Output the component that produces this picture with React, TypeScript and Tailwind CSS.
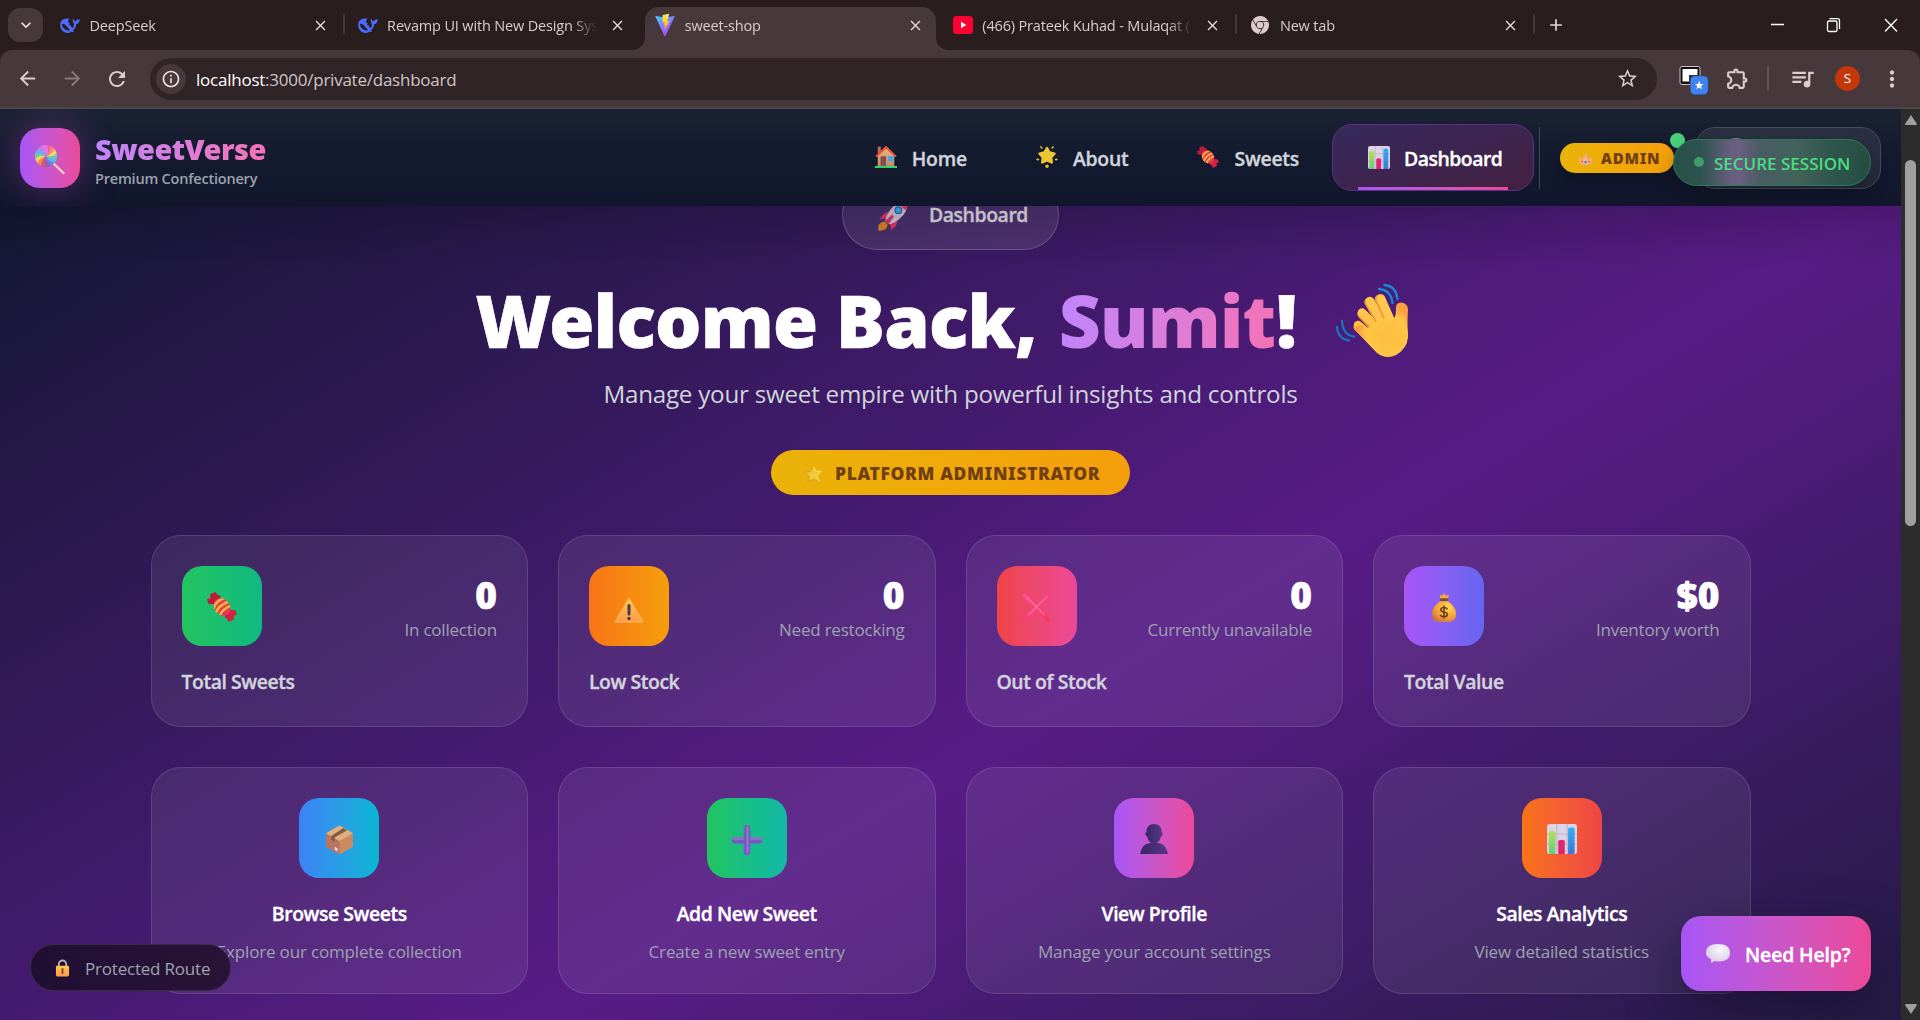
import type { ReactNode } from "react";
import {
  MdAdd,
  MdArrowBack,
  MdArrowForward,
  MdClose,
  MdInfoOutline,
  MdKeyboardArrowDown,
  MdMoreVert,
  MdOutlineExtension,
  MdQueueMusic,
  MdRefresh,
  MdStarOutline,
} from "react-icons/md";
import { SiGooglechrome } from "react-icons/si";

/* ---------- Tab favicons ---------- */

function WhaleIcon() {
  return (
    <svg viewBox="0 0 40 30" className="h-[15px] w-5">
      <path
        d="M19 1.500C11-.5 3 2.500 1 9-1 17 2 24 8 28c5 3 11 2.500 15-1 1.500 1 4 1 5 .5.500-1-1.500-1.500-2-3 4-3.500 6-7.500 6.300-12C37 11.500 39 8.500 39.500 2.500c-2-.5-3 1-5.500 1.500-2 .5-3.500 2-4 4-1-2.500-1.500-5-4-6.500-1 3.500-.5 7 1.500 9.500 1 4-.5 7.500-3 9.500C21.500 17 20.500 11 16 8c0-2.500 1-5 3-6.500z"
        fill="#4d6bfe"
      />
      <path d="M4 11.500c6-.5 10 6 14.500 11 1.500 1.500.5 3-1.500 2.500C9 24 4 18.500 4 11.500z" fill="#291d1e" />
      <circle cx="20" cy="13" r="1.700" fill="#291d1e" />
    </svg>
  );
}

function ViteIcon() {
  return (
    <svg viewBox="0 0 24 28" className="h-6 w-5">
      <defs>
        <linearGradient id="vite-v" x1="0" y1="0" x2=".7" y2="1">
          <stop offset="0" stopColor="#41d1ff" />
          <stop offset="1" stopColor="#bd34fe" />
        </linearGradient>
        <linearGradient id="vite-b" x1="0" y1="0" x2="0" y2="1">
          <stop offset="0" stopColor="#ffea83" />
          <stop offset=".3" stopColor="#ffdd35" />
          <stop offset="1" stopColor="#ff9a00" />
        </linearGradient>
      </defs>
      <path d="M.3 3.600 11.500 27.500q.5.700 1 0L23.700 3.600q.1-.6-.6-.5L12 5 .9 3.100q-.7-.1-.6.5z" fill="url(#vite-v)" />
      <path d="M17 .5 9.200 2 8.700 10.800l2.600-.5-.8 4.300 1.700-.5-1.200 6.500c2.200-3.700 4.600-7.300 6.400-11.500l-2.700.5z" fill="url(#vite-b)" />
    </svg>
  );
}

function YoutubeIcon() {
  return (
    <svg viewBox="0 0 20 18" className="h-[18px] w-5">
      <rect width="20" height="18" rx="3.500" fill="#ff0033" />
      <path d="M8 5.800v6.400L13.300 9z" fill="#fff" />
    </svg>
  );
}

/* ---------- Glossy emoji ---------- */

function Defs() {
  return (
    <svg className="absolute size-0">
      <defs>
        <linearGradient id="goldV" x1="0" y1="0" x2="0" y2="1">
          <stop offset="0" stopColor="#ffc94f" />
          <stop offset="1" stopColor="#ff9a4d" />
        </linearGradient>
        <radialGradient id="bag" cx=".65" cy=".3" r=".8">
          <stop offset="0" stopColor="#ffd84f" />
          <stop offset=".6" stopColor="#f3a13a" />
          <stop offset="1" stopColor="#c9703a" />
        </radialGradient>
        <radialGradient id="bubble" cx=".6" cy=".3" r=".9">
          <stop offset="0" stopColor="#fbf7ff" />
          <stop offset="1" stopColor="#cbbfdc" />
        </radialGradient>
        <linearGradient id="barG" x1="0" y1="0" x2="0" y2="1">
          <stop offset="0" stopColor="#b8e04c" />
          <stop offset="1" stopColor="#5fd07c" />
        </linearGradient>
        <linearGradient id="barB" x1="0" y1="0" x2="0" y2="1">
          <stop offset="0" stopColor="#32b0f2" />
          <stop offset="1" stopColor="#3b76d6" />
        </linearGradient>
        <linearGradient id="plus" x1="0" y1="0" x2="0" y2="1">
          <stop offset="0" stopColor="#6f5fb4" />
          <stop offset="1" stopColor="#8450d6" />
        </linearGradient>
        <linearGradient id="cross" x1="0" y1="0" x2="1" y2="1">
          <stop offset="0" stopColor="#ff479c" />
          <stop offset="1" stopColor="#ff3560" />
        </linearGradient>
        <linearGradient id="person" x1="0" y1="0" x2="1" y2="0">
          <stop offset="0" stopColor="#3b2662" />
          <stop offset="1" stopColor="#57368c" />
        </linearGradient>
        <linearGradient id="wall" x1="0" y1="0" x2="0" y2="1">
          <stop offset="0" stopColor="#f0b183" />
          <stop offset="1" stopColor="#c98a68" />
        </linearGradient>
        <radialGradient id="hand" cx=".62" cy=".62" r=".55">
          <stop offset="0" stopColor="#ffbd3e" />
          <stop offset=".7" stopColor="#ffc646" />
          <stop offset="1" stopColor="#f9a03f" />
        </radialGradient>
        <clipPath id="candyClip">
          <ellipse cx="16" cy="16" rx="10" ry="8.500" transform="rotate(50 16 16)" />
        </clipPath>
      </defs>
    </svg>
  );
}

type IconProps = { className: string };

function Lollipop({ className }: IconProps) {
  const colors = ["#f0609a", "#fb8a76", "#f9d864", "#63d29a", "#5bb9ee", "#6f7fe6", "#9a5ab8", "#d4567e", "#f28b50", "#f9d864", "#63d2a4", "#6fa8f2", "#c47eea", "#e07ae8"];
  return (
    <svg viewBox="0 0 30 29" className={className}>
      <path d="m18 18 10.500 10" stroke="#f3d9c4" strokeWidth="2.200" strokeLinecap="round" />
      {colors.map((c, i) => (
        <path key={i} d="M11 11Q13.500 5.500 11 0Q14.500 0 16.500 1.500Q16.500 7.500 11 11z" fill={c} transform={`rotate(${(i * 360) / 14} 11 11)`} />
      ))}
    </svg>
  );
}

function House({ className }: IconProps) {
  return (
    <svg viewBox="0 0 32 32" className={className}>
      <path d="M4 1h4.500v10H4z" fill="#b5714f" />
      <path d="M4 14 16 3l12 11v15H4z" fill="url(#wall)" />
      <path d="M8 15h8v14H8z" fill="#80504c" />
      <path d="M19 14.500h7.500v8H19z" fill="#3ea7f2" />
      <path d="M1.500 15.500 16 1.500l14.500 14" stroke="#ee4f34" strokeWidth="2.800" fill="none" strokeLinejoin="round" />
      <path d="M0 29h32v3H0z" fill="#35d06b" />
    </svg>
  );
}

function GlowStar({ className }: IconProps) {
  return (
    <svg viewBox="0 0 32 32" className={className}>
      <path
        d="m16 3 3.800 6.500 7.200 1.500-5 5.500 1 7.500-7-3-7 3 1-7.500-5-5.500 7.200-1.500z"
        fill="#edc531"
        stroke="#edc531"
        strokeWidth="3.500"
        strokeLinejoin="round"
      />
      <g fill="#e9b92c">
        <path d="M6 0q4 1 3.500 4Q6 4.500 6 0zM26 0q-4 1-3.500 4Q26 4.500 26 0zM0 19q3-2 5 .8Q2.500 23 0 19zM32 19q-3-2-5 .8Q29.500 23 32 19z" />
        <circle cx="16" cy="29.500" r="2.500" />
      </g>
    </svg>
  );
}

function Candy({ className }: IconProps) {
  return (
    <svg viewBox="0 0 32 32" className={className}>
      <path d="M9 13 1.500 12.500 0 7.500l3.500-.5L3.500 2 9 0l2 3 3.500 1-.5 5z" fill="#c2183e" />
      <path d="m23 19 7.500.5 1.500 5-3.500.5.500 4-6 3-2-4-2-.5.500-5z" fill="#d32242" />
      <g clipPath="url(#candyClip)">
        <path d="M4 4h24v24H4z" fill="#e23a58" />
        <g stroke="#f2b33d" strokeWidth="2.800" fill="none">
          <path d="M7 18Q9 9 20 6" />
          <path d="M9 24.500Q11 14 24 10" />
          <path d="M13 27Q15 18 27 14" />
        </g>
      </g>
    </svg>
  );
}

function Chart({ className }: IconProps) {
  return (
    <svg viewBox="0 0 32 36" className={className} preserveAspectRatio="none">
      <rect width="32" height="36" rx="3" fill="#dcd3e6" />
      <path d="M0 12h32M0 24h32M10.500 0v36M21.500 0v36" stroke="#b9adca" strokeWidth="1" />
      <path d="M2 10q0-2 3.500-2T9 10v26H4q-2 0-2-2z" fill="url(#barG)" />
      <path d="M12 21q0-2 3.500-2t3.500 2v15h-7z" fill="#e0246e" />
      <path d="M22.500 6q0-2 3.500-2t3.500 2v29l-2 1h-5z" fill="url(#barB)" />
    </svg>
  );
}

function Crown({ className }: IconProps) {
  return (
    <svg viewBox="0 0 32 26" className={className}>
      <path d="M1 8 9 13l7-12 7 12 8-5-3 14q-12 6-24 0z" fill="#f7b183" stroke="#f3a06d" strokeLinejoin="round" />
      <circle cx="16" cy="18.500" r="2.500" fill="#2f7be8" />
      <circle cx="9" cy="17.500" r="1.800" fill="#ea3d6e" />
      <circle cx="23" cy="17.500" r="1.800" fill="#ea3d6e" />
      <circle cx="16" cy="2.500" r="2" fill="#f39fa0" />
    </svg>
  );
}

function Rocket({ className }: IconProps) {
  return (
    <svg viewBox="0 0 32 32" className={className}>
      <path d="M7 22q-5 1-6.500 4.500Q0 30 .5 31.500 4 32 7 30.500q3-2 3-5z" fill="#dd8128" />
      <path d="M11 12q-6 1-9.500 8L9 19zM20 21q0 6-6 10l-2-7z" fill="#e0336c" />
      <path d="M30.500 1.500Q19 1 12 11q-4 5.500-4.500 10.500l3.500 3.500q6-1 11-5.500Q31.500 12 30.500 1.500z" fill="#cfc3d8" />
      <path d="M30.500 1.500q-4.500-.3-8.500 1.500 2 5 7 7.500 1.800-4.500 1.500-9z" fill="#e8386f" />
      <path d="m7.500 21.500 7-6.500 2 2-5.500 8z" fill="#e0336c" />
      <circle cx="21" cy="10.500" r="4" fill="#2c5fb0" />
      <circle cx="21" cy="10.500" r="2.800" fill="#4aa6ee" />
    </svg>
  );
}

function Wave({ className }: IconProps) {
  return (
    <svg viewBox="0 0 73 75" className={className}>
      <g fill="none" stroke="#1887d0" strokeWidth="2.300" strokeLinecap="round">
        <path d="M49.500 2Q61 3 62.500 16M44 6q12 1 13.500 14" />
        <path d="M2 44q1 12 12 13.500M7 38q1 14 12 15.500" stroke="#1777b8" />
      </g>
      <g fill="none" strokeLinecap="round">
        <path d="M23 44 43 62" stroke="#f8a63a" strokeWidth="9" />
        <path d="M23 42 42 58" stroke="#ffbf45" strokeWidth="8.500" />
        <path d="M27 31 43 48" stroke="#f0a038" strokeWidth="9.500" />
        <path d="M27 29.500 44 46" stroke="#ffc24a" strokeWidth="8.500" />
        <path d="M34 19 46 40" stroke="#f0a038" strokeWidth="9.500" />
        <path d="M35 18 47 38" stroke="#ffc64f" strokeWidth="8.500" />
        <path d="M44.500 16 54 38" stroke="#f0a038" strokeWidth="9.500" />
        <path d="M46 15.500 55 36" stroke="#ffc850" strokeWidth="8.500" />
      </g>
      <path
        d="M42 38Q50 33 56 38Q61 36 61 27Q60 20 66 19.500 73 20 73 27Q72 41 73 50Q74 65 61 72 51 77 42 70L19 46Q24 39 33 45z"
        fill="url(#hand)"
      />
    </svg>
  );
}

function Star({ className }: IconProps) {
  return (
    <svg viewBox="0 0 32 32" className={className}>
      <path
        d="m16.500 3 3.700 7.500 9.300 1-6.500 7 4 11-10.500-4L7 30l2-10-7.500-7 10.500-1.500z"
        fill="#f0c93a"
        stroke="#d9a325"
        strokeWidth="2.400"
        strokeLinejoin="round"
      />
      <path d="m16.500 3 3.700 7.500 9.300 1-6.500 7 4 11" fill="none" stroke="#f8e44c" strokeWidth="2.400" strokeLinejoin="round" />
    </svg>
  );
}

function Warning({ className }: IconProps) {
  return (
    <svg viewBox="0 0 30 26" className={className}>
      <path d="M15 1 29 25H1z" fill="url(#goldV)" stroke="#ffc05a" strokeLinejoin="round" />
      <path d="M15 8.500v8.500" stroke="#4a3a52" strokeWidth="3" strokeLinecap="round" />
      <circle cx="15" cy="21.500" r="1.700" fill="#4a3a52" />
    </svg>
  );
}

function Cross({ className }: IconProps) {
  return (
    <svg viewBox="0 0 30 30" className={className}>
      <path d="m2.500 2.500 25 25M27.500 2.500l-25 25" stroke="url(#cross)" strokeWidth="4" strokeLinecap="round" />
      <path d="m5 4.500 18 18M26 3.500 7 22.500" stroke="#ff7396" strokeWidth="1.400" strokeLinecap="round" />
    </svg>
  );
}

function MoneyBag({ className }: IconProps) {
  return (
    <svg viewBox="0 0 26 30" className={className}>
      <path d="m8.500 1.500 2.500 1.300L13 0l2 2.800 3-1.300-1 5H9.500z" fill="#f4a93c" />
      <path d="M9 5.500h8v3H9z" fill="#7a4a3a" />
      <path d="M9 8.500h8Q25.500 14 25.500 22t-8 8h-9q-8 0-8-8T9 8.500z" fill="url(#bag)" />
      <path
        d="M16.500 17q-1-2-3.500-2-3.300 0-3.300 2.300 0 1.900 3.300 2.300 3.500.5 3.500 2.600T13 24.700q-3 0-3.700-2.200M13 13v13.500"
        fill="none"
        stroke="#6b3e26"
        strokeWidth="1.700"
      />
    </svg>
  );
}

function Box({ className }: IconProps) {
  return (
    <svg viewBox="0 0 28 30" className={className}>
      <path d="M14 0 28 8v14L14 30 0 22V8z" fill="#c98a60" />
      <path d="m0 8 14 8v14L0 22z" fill="#b87660" />
      <path d="m14 0 14 8-14 8L0 8z" fill="#deb07c" />
      <path d="m18 2.500 4 2.300L9 12.500V17l-3.500-2v-4.200z" fill="#845a48" />
      <path d="m9 22 3 1.700v3.200l-3-1.700z" fill="#f0dce8" />
    </svg>
  );
}

function Plus({ className }: IconProps) {
  return (
    <svg viewBox="0 0 30 30" className={className}>
      <rect y="12" width="30" height="6.500" rx="3" fill="#7d50cc" />
      <rect y="12" width="30" height="3.200" rx="1.600" fill="#8478bd" />
      <rect x="11.700" width="6.600" height="30" rx="3.300" fill="url(#plus)" />
      <path d="M15.500 2v25" stroke="#9483c8" strokeWidth="1.600" strokeLinecap="round" />
    </svg>
  );
}

function Person({ className }: IconProps) {
  return (
    <svg viewBox="0 0 28 30" className={className}>
      <path d="M0 30q2-10.500 10-11l4-1 4 1q8 .5 10 11z" fill="url(#person)" />
      <path d="M14 0q7.500 0 7.500 8 1.500 0 1 2.500-.4 2-1.700 2Q19.500 19.500 14 19.500T7.200 12.500Q6 12.500 5.500 10.500 5 8 6.500 8 6.500 0 14 0z" fill="url(#person)" />
    </svg>
  );
}

function Lock({ className }: IconProps) {
  return (
    <svg viewBox="0 0 16 18" className={className}>
      <path d="M4 8V5a4 4 0 0 1 8 0v3" fill="none" stroke="#b9b0bf" strokeWidth="2" />
      <rect x="1" y="6.500" width="14" height="11.500" rx="1.500" fill="url(#goldV)" />
      <path d="M8 10v4.500" stroke="#7a4526" strokeWidth="2" strokeLinecap="round" />
    </svg>
  );
}

function Bubble({ className }: IconProps) {
  return (
    <svg viewBox="0 0 24 19" className={className}>
      <path d="M12 0Q24 0 24 9T12 17.500Q10 17.500 8.500 17 7 19 4.500 18.800q1-1.500.7-3.500Q0 13 0 9 0 0 12 0z" fill="url(#bubble)" />
    </svg>
  );
}

/* ---------- Browser frame ---------- */

function Tab({ icon, title, active, divider }: { icon: ReactNode; title: string; active?: boolean; divider?: boolean }) {
  return (
    <div className="relative flex h-[50px] w-[297.6px] shrink-0 items-center pl-3">
      {active && (
        <div className="absolute top-[7px] bottom-0 left-[2px] w-[291px] rounded-t-[14px] bg-[#47383b]">
          <div className="absolute bottom-0 -left-3 size-3 bg-[radial-gradient(circle_at_0_0,transparent_11.500px,#47383b_12px)]" />
          <div className="absolute -right-3 bottom-0 size-3 bg-[radial-gradient(circle_at_100%_0,transparent_11.500px,#47383b_12px)]" />
        </div>
      )}
      <div className="relative flex w-5 justify-center">{icon}</div>
      <div className="relative mt-px ml-[9.500px] w-[211px] text-[14.500px] leading-5 tracking-[-0.011em] whitespace-nowrap text-[#dccbcd] [mask-image:linear-gradient(to_right,#000_185px,transparent_210px)]">
        {title}
      </div>
      <MdClose className="relative ml-[11px] size-[17px] text-[#e8d6d8]" />
      {divider && <div className="absolute top-[14px] right-[1px] h-5 w-[2px] rounded bg-[#47383b]" />}
    </div>
  );
}

function TabStrip() {
  return (
    <div className="flex h-[50px] items-center bg-[#291d1e]">
      <div className="mr-[5px] ml-2 flex h-[34px] w-[35px] items-center justify-center rounded-xl bg-[#47383b] text-[#f1e3e4]">
        <MdKeyboardArrowDown className="size-5" />
      </div>
      <Tab icon={<WhaleIcon />} title="DeepSeek" divider />
      <Tab icon={<WhaleIcon />} title="Revamp UI with New Design Sys" />
      <Tab icon={<ViteIcon />} title="sweet-shop" active />
      <Tab icon={<YoutubeIcon />} title="(466) Prateek Kuhad - Mulaqat (" divider />
      <Tab icon={<SiGooglechrome className="size-[18px] text-[#dccbcd]" />} title="New tab" divider />
      <MdAdd className="ml-[10px] size-5 text-[#e8d6d8]" />
      <svg viewBox="0 0 128 16" className="mr-[22px] ml-auto h-4 w-[128px]" fill="none" stroke="#fff" strokeWidth="1.300">
        <path d="M1 7.500h13M115 2l12 12.500M127 2l-12 12.500" />
        <rect x="57.500" y="4" width="9.500" height="10.500" rx="1.500" />
        <path d="M59.500 1.700h8q2 0 2 2V12" />
      </svg>
    </div>
  );
}

function Toolbar() {
  return (
    <div className="bg-[#291d1e]">
      <div className="flex h-[59px] items-center rounded-t-xl border-b-2 border-[#4c4744] bg-[#47383b] pl-4 text-[#dfcccf]">
        <MdArrowBack className="size-[23px]" />
        <MdArrowForward className="ml-[22px] size-[23px] text-[#8a787b]" />
        <MdRefresh className="ml-[21px] size-6" />
        <div className="ml-[21px] flex h-[42px] w-[1507px] items-center rounded-full bg-[#302426] pr-[18px] pl-[6px]">
          <div className="flex size-[30px] items-center justify-center rounded-full bg-[#47383b]">
            <MdInfoOutline className="size-[20px] text-[#efe2e3]" />
          </div>
          <div className="mt-[2px] ml-[10px] text-[17px] tracking-[-0.014em] text-[#d3c4c6]">
            <span className="text-white">localhost</span>:3000/private/dashboard
          </div>
          <MdStarOutline className="ml-auto size-[23px]" />
        </div>
        <svg viewBox="0 0 30 34" className="ml-[22px] h-[34px] w-[30px]">
          <rect x="1" y="4.500" width="20" height="18" rx="2" fill="#111" stroke="#cdbfc1" strokeWidth="1" />
          <path d="M3.500 7h15v12.500h-15z" fill="#fff" />
          <path d="M10 13h9v8h-9z" fill="#333" />
          <rect x="11.500" y="14" width="17.500" height="18.500" rx="4.500" fill="#3f83f3" stroke="#2c5bb0" strokeWidth=".6" />
          <path d="m20.200 18.800 1.200 3.100 3.200.2-2.500 2 .9 3.200-2.800-1.800-2.800 1.800.9-3.200-2.500-2 3.200-.2z" fill="#fff" />
        </svg>
        <MdOutlineExtension className="ml-[16px] size-[25px]" />
        <div className="ml-[17px] h-6 w-[2px] bg-[#635356]" />
        <MdQueueMusic className="ml-[20px] size-[27px]" />
        <div className="ml-[19px] flex size-[25px] items-center justify-center rounded-full bg-[#c3370b] text-[13.500px] text-white">S</div>
        <MdMoreVert className="ml-[19px] size-[26px]" />
      </div>
    </div>
  );
}

function Scrollbar() {
  return (
    <div className="flex w-[19px] shrink-0 flex-col items-center bg-[#2c2c2c] py-[6px]">
      <svg viewBox="0 0 12 10" className="h-[10px] w-3" fill="#9f9f9f">
        <path d="M6 0 12 9q0 1-1 1H1Q0 10 0 9z" />
      </svg>
      <div className="mt-[35px] h-[366px] w-[11px] rounded-full bg-[#9f9f9f]" />
      <svg viewBox="0 0 12 10" className="mt-auto h-[10px] w-3" fill="#9f9f9f">
        <path d="M6 10 12 1q0-1-1-1H1Q0 0 0 1z" />
      </svg>
    </div>
  );
}

/* ---------- Site header ---------- */

const semibold = "font-semibold [-webkit-text-stroke:0.35px_currentColor]";

function NavItem({ icon, label }: { icon: ReactNode; label: string }) {
  return (
    <div className={`flex items-center gap-[15px] text-[19.400px] tracking-[-0.012em] text-[#d1d5db] ${semibold}`}>
      {icon}
      <span className="pt-[3px]">{label}</span>
    </div>
  );
}

function SiteHeader() {
  return (
    <header className="absolute inset-x-0 top-0 z-20 flex h-[97px] items-center overflow-hidden bg-linear-to-b from-[#1a2333] via-[#131a2e] to-[#11162d] pr-5 pl-5">
      <div className="flex size-[60px] shrink-0 items-center justify-center rounded-[20px] bg-linear-to-r from-[#a855f7] to-[#ec4899] shadow-[0_0_38px_rgba(192,70,200,0.42)]">
        <Lollipop className="mt-[3px] h-[29px] w-[30px]" />
      </div>
      <div className="ml-[15px] pt-1">
        <div className="w-fit bg-linear-to-r from-[#c084fc] to-[#f472b6] bg-clip-text font-['Noto_Sans'] text-[29px] leading-[35px] font-black tracking-[-0.019em] text-transparent">
          SweetVerse
        </div>
        <div className="mt-[3px] text-[14.500px] leading-5 font-semibold tracking-[-0.014em] text-[#9ca3af]">Premium Confectionery</div>
      </div>
      <nav className="ml-auto flex items-center">
        <div className="mr-[69px]">
          <NavItem icon={<House className="size-[22px]" />} label="Home" />
        </div>
        <div className="mr-[69px]">
          <NavItem icon={<GlowStar className="size-[22px]" />} label="About" />
        </div>
        <div className="mr-[33px]">
          <NavItem icon={<Candy className="size-[22px]" />} label="Sweets" />
        </div>
        <div className="relative flex h-[67px] w-[202px] items-center rounded-[20px] border border-[#5b2f86] bg-linear-to-br from-[#352a5c] via-[#3e2450] to-[#43203f] pl-[35px]">
          <div className={`flex items-center gap-[14px] text-[19.400px] tracking-[-0.025em] text-white ${semibold}`}>
            <Chart className="h-[23px] w-[22px]" />
            <span className="pt-[3px]">Dashboard</span>
          </div>
          <div className="absolute bottom-0 left-[25px] h-[3px] w-[150px] bg-linear-to-r from-[#a855f7] to-[#ec4899]" />
        </div>
      </nav>
      <div className="ml-[5px] h-[62px] w-px bg-[#414556]" />
      <div className="ml-5 flex h-[30px] w-[114px] items-center rounded-full bg-linear-to-r from-[#eab308] to-[#f59e0b] pl-[18px] font-['Noto_Sans'] text-[15px] font-black tracking-[0.050em] text-[#713f12] shadow-[0_6px_14px_rgba(0,0,0,0.25)]">
        <Crown className="mt-[3px] mr-[8px] h-[13px] w-[15px]" />
        <span className="pt-px">ADMIN</span>
      </div>
      <div className="relative ml-[21px] h-[62px] w-[186px] rounded-[20px] border border-[#474b5c] bg-linear-to-b from-[#2a3042] to-[#262a3d]">
        <div className="absolute top-[10px] left-[20px] size-10 rounded-full bg-linear-to-r from-[#a855f7] to-[#ec4899]" />
        <div className="absolute top-[5px] -left-[26px] size-[15px] rounded-full bg-[#4ad07b]" />
        <div className="absolute top-[11px] -left-[23px] flex h-[47px] w-[198px] items-center rounded-full border border-[#2a7b55] bg-[linear-gradient(90deg,#25504a_0%,#2f5350_14%,#665f7d_29%,#6b5f83_33%,#495c64_44%,#42635b_62%,#2e5549_82%,#254d42_100%)] pl-5 shadow-[0_10px_20px_rgba(0,0,0,0.25)]">
          <div className="size-[10px] rounded-full bg-[#3f9f6a]" />
          <span className="mt-[3px] ml-[10px] text-[17px] font-semibold whitespace-nowrap text-[#4ade80]">SECURE SESSION</span>
        </div>
      </div>
    </header>
  );
}

/* ---------- Dashboard ---------- */

const stats = [
  { label: "Total Sweets", value: "0", note: "In collection", tile: "from-[#22c55e] to-[#10b981]", icon: <Candy className="mt-[2px] size-[30px]" /> },
  { label: "Low Stock", value: "0", note: "Need restocking", tile: "from-[#f97316] to-[#f59e0b]", icon: <Warning className="mt-[7px] h-[26px] w-[30px]" /> },
  { label: "Out of Stock", value: "0", note: "Currently unavailable", tile: "from-[#ef4444] to-[#ec4899]", icon: <Cross className="mt-[2px] size-[29px]" /> },
  { label: "Total Value", value: "$0", note: "Inventory worth", tile: "from-[#a855f7] to-[#6366f1]", icon: <MoneyBag className="mt-[2px] h-[29px] w-[26px]" /> },
];

const actions = [
  { title: "Browse Sweets", note: "Explore our complete collection", tile: "from-[#3b82f6] to-[#06b6d4]", icon: <Box className="mt-[3px] h-[30px] w-[27px]" /> },
  { title: "Add New Sweet", note: "Create a new sweet entry", tile: "from-[#22c55e] to-[#14b8a6]", icon: <Plus className="mt-[3px] size-[30px]" /> },
  { title: "View Profile", note: "Manage your account settings", tile: "from-[#a855f7] to-[#ec4899]", icon: <Person className="mt-[2px] h-[30px] w-[28px]" /> },
  { title: "Sales Analytics", note: "View detailed statistics", tile: "from-[#f97316] to-[#ef4444]", icon: <Chart className="mt-[2px] h-[30px] w-[30px]" /> },
];

const cardClass = "rounded-[30px] border border-white/12 bg-white/7 p-[30px]";
const tileClass = "flex size-20 shrink-0 items-center justify-center rounded-[20px] bg-linear-to-r";

function Dashboard() {
  return (
    <main className="flex h-full flex-col items-center pt-[71px]">
      <div className={`flex h-[70px] w-[217px] shrink-0 items-center rounded-full border border-white/20 bg-white/10 pl-[35px] text-[19.400px] tracking-[-0.022em] text-[#e0dbe4] ${semibold}`}>
        <Rocket className="mr-[20px] size-[31px]" />
        <span>Dashboard</span>
      </div>

      <h1 className="mt-[33px] flex h-[75px] w-[950px] shrink-0 items-center font-['Noto_Sans'] text-[73px] leading-[75px] font-black tracking-[-0.010em] whitespace-nowrap text-white [-webkit-text-stroke:0.6px_#fff]">
        <span className="-mt-[2px]">Welcome Back,</span>
        <span className="-mt-[2px] ml-[22px] bg-linear-to-r from-[#c084fc] to-[#f472b6] bg-clip-text tracking-[-0.014em] text-transparent [-webkit-text-stroke:0px]">Sumit</span>
        <span className="-mt-[2px] ml-px">!</span>
        <Wave className="mr-[18px] ml-auto h-[75px] w-[73px]" />
      </h1>
      <p className="mt-[16px] text-[24.200px] leading-10 tracking-[-0.010em] text-[#d1d5db]">
        Manage your sweet empire with powerful insights and controls
      </p>
      <div className="mt-[36px] flex h-[45px] w-[359px] shrink-0 items-center rounded-full bg-linear-to-r from-[#eab308] to-[#f59e0b] pl-[33px] font-['Noto_Sans'] text-[17.500px] font-black tracking-[0.035em] whitespace-nowrap text-[#713f12]">
        <Star className="mt-[3px] mr-[13px] size-[18px]" />
        <span className="pt-[2px]">PLATFORM ADMINISTRATOR</span>
      </div>

      <div className="mt-10 grid w-[1600px] grid-cols-4 gap-[30px]">
        {stats.map((s) => (
          <section key={s.label} className={`h-[192px] ${cardClass}`}>
            <div className="flex items-center justify-between">
              <div className={`${tileClass} ${s.tile}`}>{s.icon}</div>
              <div className="pt-px text-right">
                <div className="font-['Noto_Sans'] text-[37px] leading-[45px] font-black text-white [-webkit-text-stroke:0.6px_#fff]">{s.value}</div>
                <div className="pt-px text-[17px] leading-6 tracking-[-0.012em] text-[#9ca3af]">{s.note}</div>
              </div>
            </div>
            <div className={`mt-[21px] text-[19.400px] leading-[30px] tracking-[-0.022em] text-[#d1d5db] ${semibold}`}>{s.label}</div>
          </section>
        ))}
      </div>

      <div className="mt-10 grid w-[1600px] grid-cols-4 gap-[30px]">
        {actions.map((a) => (
          <section key={a.title} className={`flex h-[227px] flex-col items-center ${cardClass}`}>
            <div className={`${tileClass} ${a.tile}`}>{a.icon}</div>
            <div className={`mt-[21px] shrink-0 text-[19.400px] leading-[30px] tracking-[-0.022em] text-white ${semibold}`}>{a.title}</div>
            <div className="mt-[10px] shrink-0 text-[17px] leading-[25px] tracking-[-0.010em] text-[#9ca3af]">{a.note}</div>
          </section>
        ))}
      </div>
    </main>
  );
}

export default function App() {
  return (
    <div className="flex h-[1020px] w-[1920px] flex-col overflow-hidden font-['Open_Sans','Noto_Sans',sans-serif]">
      <Defs />
      <TabStrip />
      <Toolbar />
      <div className="flex min-h-0 flex-1">
        <div className="relative min-w-0 flex-1 overflow-hidden bg-[linear-gradient(149deg,#121731_3.500%,#581c87_60%,#111a2e_114%)]">
          <SiteHeader />
          <div className="absolute inset-x-0 top-[97px] z-10 h-16 bg-linear-to-b from-black/15 to-transparent" />
          <Dashboard />
          <div className="absolute bottom-[29px] left-[30px] flex h-[47px] w-[201px] items-center rounded-full border border-[#3a2b45] bg-linear-to-r from-[#200f33] to-[#291337] pl-6 text-[17px] tracking-[-0.012em] text-[#9ca3af]">
            <Lock className="mr-[15px] h-[18px] w-[15px]" />
            <span className="pt-[2px]">Protected Route</span>
          </div>
          <div className={`absolute right-[30px] bottom-[29px] flex h-[75px] w-[190px] items-center rounded-[20px] bg-linear-to-r from-[#a855f7] to-[#ec4899] pl-[25px] text-[19.400px] tracking-[-0.006em] text-white shadow-[0_20px_50px_rgba(20,16,40,0.6)] ${semibold}`}>
            <Bubble className="mr-[15px] h-[19px] w-6" />
            <span className="pt-[2px]">Need Help?</span>
          </div>
        </div>
        <Scrollbar />
      </div>
    </div>
  );
}
